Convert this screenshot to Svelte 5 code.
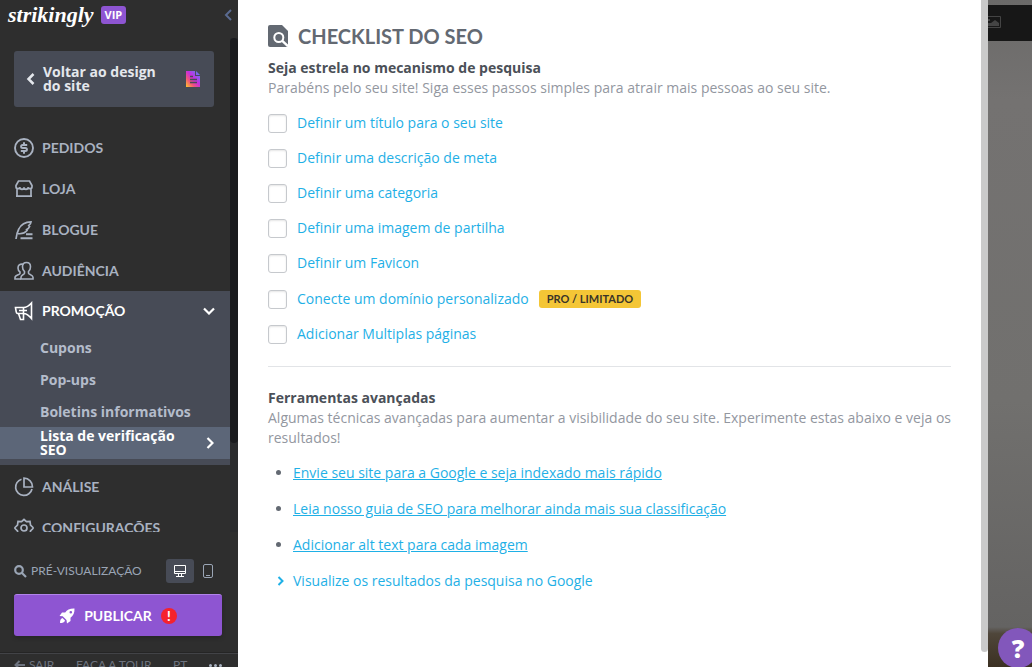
<script>
  const menu = [
    { label: "Pedidos", icon: "orders" },
    { label: "Loja", icon: "store" },
    { label: "Blogue", icon: "blog" },
    { label: "Audiência", icon: "audience" },
    {
      label: "Promoção",
      icon: "promo",
      items: ["Cupons", "Pop-ups", "Boletins informativos", "Lista de verificação SEO"],
    },
    { label: "Análise", icon: "analytics" },
    { label: "Configurações", icon: "settings" },
  ]

  const tasks = [
    { label: "Definir um título para o seu site" },
    { label: "Definir uma descrição de meta" },
    { label: "Definir uma categoria" },
    { label: "Definir uma imagem de partilha" },
    { label: "Definir um Favicon" },
    { label: "Conecte um domínio personalizado", badge: "PRO / LIMITADO" },
    { label: "Adicionar Multiplas páginas" },
  ]

  const tools = [
    "Envie seu site para a Google e seja indexado mais rápido",
    "Leia nosso guia de SEO para melhorar ainda mais sua classificação",
    "Adicionar alt text para cada imagem",
  ]

  let current = $state("Lista de verificação SEO")
  let open = $state("Promoção")
  let device = $state("desktop")
</script>

{#snippet icon(name)}
  <svg class="icon" viewBox="0 0 20 20" aria-hidden="true">
    {#if name == "orders"}
      <circle cx="10" cy="10" r="9" stroke-width="1.900" />
      <path d="M13.200 7H8.600a1.500 1.500 0 0 0 0 3h2.800a1.500 1.500 0 0 1 0 3H6.800M10 4.200V7M10 13v2.800" stroke-width="2" />
    {:else if name == "store"}
      <path d="M4.500 2h11L18 6.500v1.200a2 2 0 0 1-2 2 2 2 0 0 1-2-1.400 2 2 0 0 1-4 0 2 2 0 0 1-4 0 2 2 0 0 1-2 1.400 2 2 0 0 1-2-2V6.500ZM3 9.500V17M17 9.500V17M2 17.200h16" />
    {:else if name == "blog"}
      <path d="M2 19c.5-4 1.200-7 2.800-10C7 4.500 11 1.800 17 1.800c-.2 2-.9 2.800-2.200 3.700l.8.9c-.8 2-1.500 2.600-3 3.200l.5.900C10.500 13.500 7 14 4 13.600" stroke-width="1.700" />
      <path d="M12 14.300h6.500M6.500 18.200h12" stroke-width="2" />
    {:else if name == "audience"}
      <path d="M12.500 1.500c2.500 0 4 1.700 4 4.200 0 2.200-.8 3.800-2 4.800v1.700c0 1.200 4.500 1.600 4.500 4V18H7v-1.800c0-2.400 3.500-2.800 3.500-4v-1.700c-1.200-1-2-2.600-2-4.800 0-2.500 1.500-4.200 4-4.200Z" stroke-width="1.600" />
      <path d="M9.500 3.300C5.500 2.500 4 4.500 4 7c0 2 .8 3.200 2 4v1.500c0 1.200-5 1.500-5 4V18h6" stroke-width="1.600" />
    {:else if name == "promo"}
      <path d="M1.500 6.500h8c3 0 5.500-1.700 8-4.500v15.500c-2.500-3-5-5-8-5H3.500C2 12.500 2 9.500 1.500 6.500ZM9.500 6.500v12h-3L4.500 12.500M5 9.500h8" stroke-width="1.600" />
    {:else if name == "analytics"}
      <path d="M7.500 2.200A8.300 8.300 0 1 0 18 12M10 1.200V10h8.500A8.500 8.500 0 0 0 10 1.200Z" />
    {:else if name == "settings"}
      <path d="m10 1.500 2.500 2.200 3.500-.2.500 3.500 2.500 2.500v1l-2.500 2.500-.5 3.500-3.500-.2L10 18.500l-2.500-2.200-3.500.2-.500-3.500L1 10.500v-1L3.500 7 4 3.500l3.500.2Z" />
      <circle cx="10" cy="10" r="3" />
    {/if}
  </svg>
{/snippet}

<div class="app">
  <aside>
    <header>
      <a class="logo" href="#home">strikingly</a>
      <span class="vip">VIP</span>
      <button class="collapse" aria-label="Recolher menu">
        <svg viewBox="0 0 8 12" width="8" height="12"><path d="M7 1 2 6l5 5" /></svg>
      </button>
    </header>

    <div class="scroller">
      <div class="scroll">
        <button class="back">
          <svg viewBox="0 0 9 14" width="9" height="14"><path d="M7.500 2 2.500 7l5 5" /></svg>
          <span>Voltar ao design do site</span>
          <svg class="doc" viewBox="0 0 16 18" width="16" height="18">
            <defs>
              <linearGradient id="doc-fill" x1="0" y1="1" x2="1" y2="0">
                <stop offset="0" stop-color="#ffc928" />
                <stop offset="0.300" stop-color="#f2557a" />
                <stop offset="0.550" stop-color="#c72de0" />
                <stop offset="1" stop-color="#4a8ff5" />
              </linearGradient>
            </defs>
            <path d="M1 1h9v5h5v11H1ZM11 1l4 4h-4Z" fill="url(#doc-fill)" />
            <path d="M5 6.500h3M5 9.500h7M5 12.500h7" />
          </svg>
        </button>

        <nav>
          {#each menu as m}
            {#if m.items}
              <div class="group">
                <button class="item active" onclick={() => open = open == m.label ? "" : m.label}>
                  {@render icon(m.icon)}
                  {m.label}
                  <svg class="arrow" viewBox="0 0 12 8" width="12" height="8"><path d="m1 1.500 5 5 5-5" /></svg>
                </button>
                {#if open == m.label}
                  <ul>
                    {#each m.items as sub}
                      <li class:selected={sub == current}>
                        <a href="#sub" onclick={() => current = sub}>
                          <span>{sub}</span>
                          {#if sub == current}
                            <svg class="arrow" viewBox="0 0 8 12" width="8" height="12"><path d="m1.500 1 5 5-5 5" /></svg>
                          {/if}
                        </a>
                      </li>
                    {/each}
                  </ul>
                {/if}
              </div>
            {:else}
              <button class="item">
                {@render icon(m.icon)}
                {m.label}
              </button>
            {/if}
          {/each}
        </nav>
      </div>
      <div class="track"><div class="thumb"></div></div>
    </div>

    <div class="bottom">
      <div class="preview">
        <svg viewBox="0 0 13 13" width="13" height="13"><circle cx="5" cy="5" r="3.800" /><path d="m8 8 4 4" /></svg>
        <span>Pré-visualização</span>
        <button class:on={device == "desktop"} aria-label="Desktop" onclick={() => device = "desktop"}>
          <svg viewBox="0 0 14 14" width="14" height="14"><path d="M1.500 1.500h11v8h-11ZM1 7.500h12M5.500 10v2M8.500 10v2M3 12.500h8" /></svg>
        </button>
        <button class:on={device == "mobile"} aria-label="Celular" onclick={() => device = "mobile"}>
          <svg viewBox="0 0 12 16" width="12" height="16"><rect x="1.500" y="1.500" width="9" height="13" rx="1.500" /><path d="M4 12.500h4" /></svg>
        </button>
      </div>
      <button class="publish">
        <svg viewBox="0 0 16 16" width="16" height="16"><path d="M15.500.5C11 .3 8 1.800 6.200 4.500H3L.5 8l3.200.3 3.800 3.800L8 15.500l3.500-2.500V9.800c2.800-2 4.200-5 4-9.300ZM11.800 3a1.300 1.300 0 1 1 0 2.600 1.300 1.300 0 0 1 0-2.600Z" fill="#fff" fill-rule="evenodd" /><path d="M3.500 10C1.500 10.500 1 12.500 1 15c2.500 0 4.500-.5 5-2.500Z" fill="#fff" /></svg>
        Publicar
        <span class="alert">!</span>
      </button>
      <footer>
        <a href="#exit">
          <svg viewBox="0 0 11 10" width="11" height="10"><path d="M11 5H2M5.500 1 1.500 5l4 4" /></svg>
          Sair
        </a>
        <a href="#tour">Faça a tour</a>
        <a href="#lang">PT</a>
        <button class="more" aria-label="Mais"><i></i><i></i><i></i></button>
      </footer>
    </div>
  </aside>

  <main>
    <h1>
      <svg viewBox="0 0 20 22" width="20" height="22">
        <path d="M2 0h12l6 6v14a2 2 0 0 1-2 2H2a2 2 0 0 1-2-2V2a2 2 0 0 1 2-2Z" fill="#636972" />
        <g fill="none" stroke="#fff" stroke-width="2"><circle cx="10.800" cy="12.500" r="4.500" /><path d="m14 15.700 6 5.500" stroke-width="2.400" /></g>
      </svg>
      Checklist do SEO
    </h1>

    <section>
      <h2>Seja estrela no mecanismo de pesquisa</h2>
      <p>Parabéns pelo seu site! Siga esses passos simples para atrair mais pessoas ao seu site.</p>
      <ul class="tasks">
        {#each tasks as t, i}
          <li>
            <input type="checkbox" id="task-{i}" />
            <label for="task-{i}">{t.label}</label>
            {#if t.badge}<span class="badge">{t.badge}</span>{/if}
          </li>
        {/each}
      </ul>
    </section>

    <section>
      <h2>Ferramentas avançadas</h2>
      <p>Algumas técnicas avançadas para aumentar a visibilidade do seu site. Experimente estas abaixo e veja os resultados!</p>
      <ul class="tools">
        {#each tools as tool}
          <li><a href="#tool">{tool}</a></li>
        {/each}
      </ul>
      <a class="results" href="#results">
        <svg viewBox="0 0 8 10" width="8" height="10"><path d="m1.500 1 4 4-4 4" /></svg>
        Visualize os resultados da pesquisa no Google
      </a>
    </section>
  </main>

  <div class="mainbar"><div></div></div>

  <div class="site">
    <div class="sitebar">
      <svg viewBox="0 0 13 12" width="13" height="12"><path d="M0 .5h12.500v11H0" fill="none" stroke="#444" /><path d="M0 7h3l4-3 4 3v3H0ZM0 3h2v2H0Z" fill="#444" /></svg>
    </div>
  </div>
  <button class="help" aria-label="Ajuda">?</button>
</div>

<style>
  :global(body) {
    margin: 0;
    font-family: "Open Sans", sans-serif;
    font-size: 14px;
    line-height: 20px;
  }
  .app {
    display: flex;
    height: 100vh;
    overflow: hidden;
    background: #fff;
    position: relative;
  }
  ul {
    list-style: none;
    margin: 0;
    padding: 0;
  }
  button {
    font: inherit;
    color: inherit;
    background: none;
    border: none;
    padding: 0;
    cursor: pointer;
  }
  a {
    text-decoration: none;
    color: inherit;
  }
  svg {
    flex: none;
  }
  aside svg {
    fill: none;
    stroke: currentColor;
  }

  aside {
    flex: none;
    width: 238px;
    background: #2e2e2e;
    color: #a9b2c1;
    display: flex;
    flex-direction: column;
  }
  header {
    display: flex;
    align-items: center;
    height: 30px;
    margin-bottom: 8px;
    padding: 0 6px 0 8px;
    gap: 7px;
  }
  .logo {
    font: italic bold 22px "Liberation Serif", serif;
    color: #fff;
  }
  .vip {
    background: #8e55d2;
    color: #fff;
    font-size: 11px;
    font-weight: 700;
    line-height: 18px;
    padding: 0 4px;
    border-radius: 3px;
  }
  .collapse {
    margin-left: auto;
    color: #5a6b91;
    display: flex;
  }
  .collapse svg {
    stroke-width: 2;
  }

  .scroller {
    flex: 1;
    min-height: 0;
    display: flex;
  }
  .scroll {
    flex: 1;
    overflow: hidden;
  }
  .track {
    width: 8px;
    background: #2a2b2d;
  }
  .thumb {
    height: 82%;
    background: #1a1b1e;
    border-radius: 4px;
  }
  .back {
    display: flex;
    align-items: center;
    gap: 8px;
    width: calc(100% - 30px);
    height: 56px;
    margin: 13px 16px 20px 14px;
    padding: 0 13px 0 12px;
    border-radius: 3px;
    background: #474b56;
    color: #e4e7ec;
    font-weight: 700;
    line-height: 14px;
    text-align: left;
  }
  .back span {
    max-width: 124px;
  }
  .back svg {
    stroke-width: 2.5;
  }
  .back .doc {
    margin-left: auto;
    stroke: #474b56;
    stroke-width: 1.5;
  }
  .doc path:first-of-type {
    stroke: none;
  }

  .item {
    display: flex;
    align-items: center;
    gap: 8px;
    width: 100%;
    height: 41px;
    padding: 0 15px 0 14px;
    font-family: Lato, sans-serif;
    font-weight: 700;
    text-transform: uppercase;
  }
  .icon {
    width: 20px;
    height: 20px;
    stroke-width: 1.7;
  }
  .group {
    background: #474b56;
    padding-bottom: 6px;
    margin-bottom: 1px;
  }
  .group .item {
    height: 40px;
    color: #fff;
  }
  .arrow {
    margin-left: auto;
    stroke-width: 2.2;
  }
  .group a {
    display: flex;
    align-items: center;
    box-sizing: border-box;
    height: 32px;
    padding: 2px 16px 0 40px;
    font-weight: 700;
    line-height: 14px;
    color: #b4bccb;
  }
  .group a span {
    max-width: 152px;
  }
  .selected {
    background: #5c6678;
  }
  .group .selected a {
    padding-top: 0;
    color: #fff;
  }

  .bottom {
    flex: none;
    height: 135px;
    overflow: hidden;
    font-family: Lato, sans-serif;
  }
  .preview {
    display: flex;
    align-items: center;
    padding: 27px 16px 11px 14px;
    text-transform: uppercase;
    font-size: 12px;
    line-height: 24px;
    color: #9aa5b5;
  }
  .preview > svg {
    stroke-width: 2.2;
    margin-right: 4px;
  }
  .preview span {
    margin-right: auto;
  }
  .preview button {
    display: flex;
    align-items: center;
    justify-content: center;
    width: 28px;
    height: 24px;
    border-radius: 3px;
  }
  .preview .on {
    background: #474b56;
    color: #fff;
  }
  .publish {
    display: flex;
    align-items: center;
    justify-content: center;
    gap: 9px;
    width: calc(100% - 30px);
    height: 42px;
    margin: 0 16px 17px 14px;
    border-radius: 3px;
    border-top: 1px solid #b184ea;
    background: #8e55d2;
    color: #fff;
    font-weight: 700;
    text-transform: uppercase;
    box-shadow: 0 2px 4px #0003;
  }
  .publish svg {
    stroke: none;
  }
  .alert {
    width: 16px;
    border-radius: 8px;
    background: #f5222d;
    font-weight: 900;
    font-size: 13px;
    line-height: 16px;
  }
  footer {
    display: flex;
    align-items: center;
    justify-content: space-between;
    padding: 1px 16px 0 14px;
    border-top: 1px solid #424347;
    box-shadow: 0 -1px #252525;
    font-size: 12px;
    text-transform: uppercase;
    white-space: nowrap;
    color: #6d737f;
  }
  footer a {
    display: flex;
    align-items: center;
    gap: 4px;
  }
  footer svg {
    stroke-width: 2;
  }
  .more {
    display: flex;
    gap: 2px;
  }
  .more i {
    width: 3px;
    height: 3px;
    background: #a9b2c1;
    border-radius: 50%;
  }

  main {
    flex: 1;
    min-width: 0;
    padding: 23px 30px;
    color: #93979f;
  }
  h1 {
    display: flex;
    align-items: center;
    gap: 10px;
    margin: 0 0 9px;
    font: 700 20px/26px Lato, sans-serif;
    text-transform: uppercase;
    color: #636972;
  }
  h2 {
    margin: 0;
    font-size: 14px;
    line-height: 20px;
    font-weight: 700;
    color: #4b5058;
  }
  p {
    margin: 0;
  }
  section + section {
    margin-top: 22px;
    padding-top: 21px;
    border-top: 1px solid #e2e4e7;
  }
  .tasks {
    display: flex;
    flex-direction: column;
    gap: 15px;
    margin-top: 15px;
  }
  .tasks li {
    display: flex;
    align-items: center;
  }
  .tasks li:has(.badge) {
    padding-top: 1px;
  }
  .tasks input {
    appearance: none;
    box-sizing: border-box;
    width: 19px;
    height: 19px;
    margin: 0 10px 0 0;
    border: 1px solid #c6c9cd;
    border-radius: 3px;
    background: #fff;
    box-shadow: inset 0 1px 2px #0000001a;
  }
  .tasks input:checked {
    background: #1fb0e6;
  }
  label,
  main a {
    color: #1fb0e6;
  }
  .badge {
    margin-left: 10px;
    padding: 0 8px;
    border-radius: 3px;
    background: #f4c636;
    color: #3a3428;
    font: 700 11px/18px Lato, sans-serif;
  }
  .tools {
    list-style: disc;
    margin-top: 15px;
    padding-left: 25px;
  }
  .tools li {
    margin-bottom: 16px;
  }
  .tools li::marker {
    color: #636972;
  }
  .tools a {
    text-decoration: underline;
  }
  .results {
    display: flex;
    align-items: center;
    gap: 8px;
    padding-left: 9px;
  }
  .results svg {
    fill: none;
    stroke: currentColor;
    stroke-width: 2;
  }

  .mainbar {
    width: 7px;
    background: #fff;
    padding-bottom: 15px;
  }
  .mainbar div {
    height: 100%;
    background: #cacaca;
    border-radius: 0 0 4px 4px;
  }
  .site {
    width: 44px;
    padding-top: 5px;
    background: linear-gradient(#6b6a69, #747271 15%, #71706e 60%, #646362 94%, #4f463a 95%, #3b3022);
  }
  .sitebar {
    height: 36px;
    background: #171717;
    display: flex;
  }
  .sitebar svg {
    margin-top: 11px;
  }
  .help {
    position: absolute;
    right: -6px;
    bottom: -1px;
    width: 40px;
    height: 40px;
    border-radius: 50%;
    background: #8257bb;
    color: #fff;
    font-size: 25px;
    font-weight: 800;
  }
</style>
